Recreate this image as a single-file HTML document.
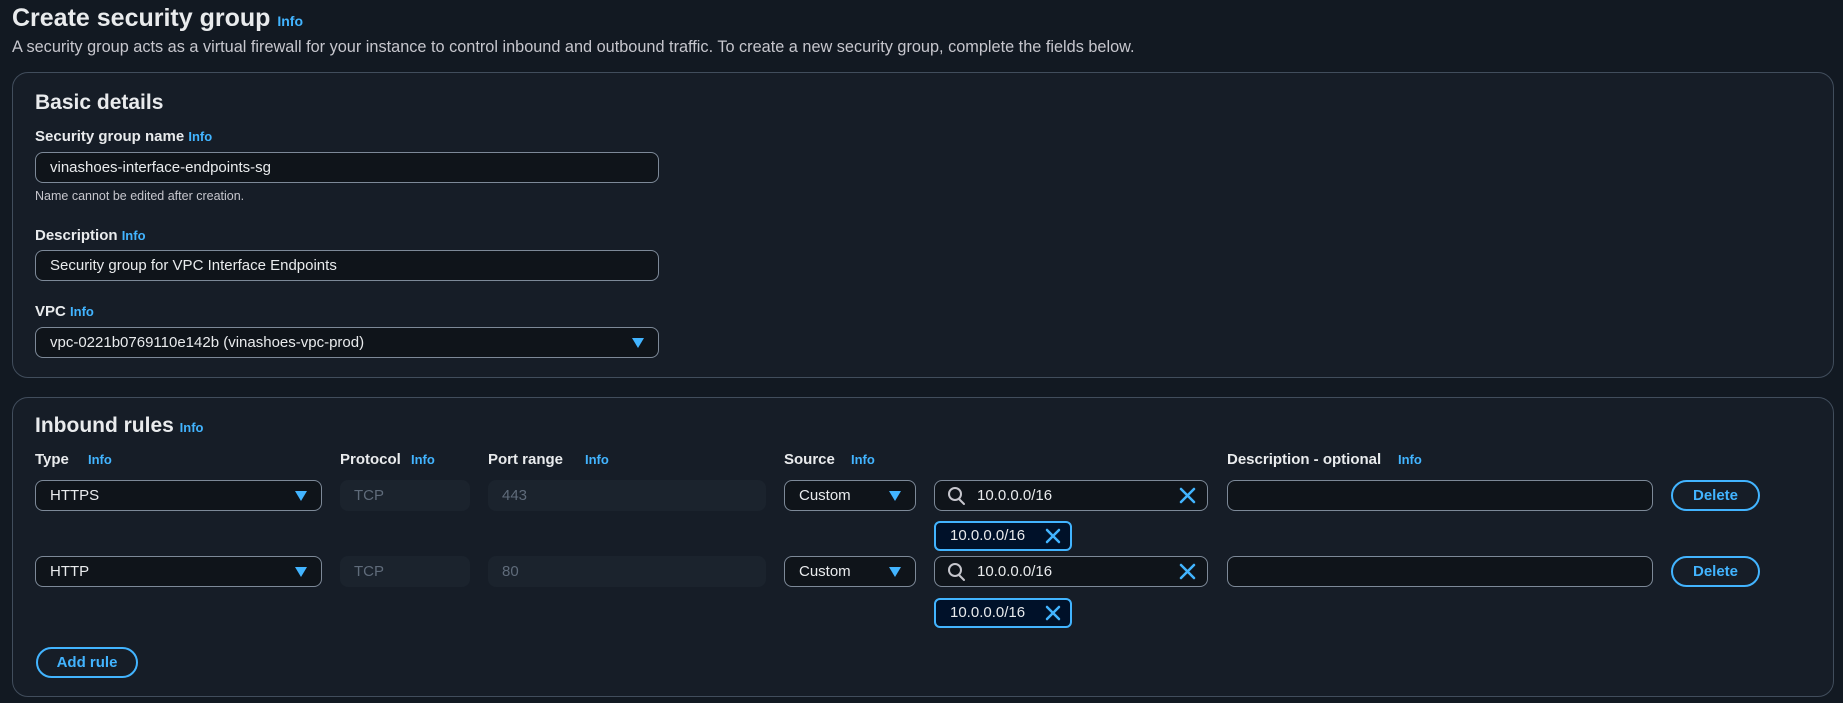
<!DOCTYPE html>
<html><head><meta charset="utf-8"><style>
*{box-sizing:border-box;margin:0;padding:0}
body{width:1843px;height:703px;background:#121922;font-family:"Liberation Sans",Arial,sans-serif;color:#e9ebed;position:relative;overflow:hidden}
.a{position:absolute;white-space:nowrap}
.info{color:#42b4ff;font-weight:bold;font-size:13px}
.panel{position:absolute;left:12px;width:1822px;background:#161d27;border:1px solid #414d5c;border-radius:16px}
.lbl{font-weight:bold;font-size:15px}
.inp{position:absolute;height:31px;border:1px solid #7d8998;border-radius:8px;background:#0f141a;font-size:15px;line-height:29px;padding-left:14px;color:#e9ebed}
.dis{position:absolute;height:31px;border-radius:8px;background:#1b232d;font-size:15px;line-height:31px;padding-left:14px;color:#5f6b7a}
.arr{position:absolute;right:14px;top:10px;width:0;height:0;border-left:6px solid transparent;border-right:6px solid transparent;border-top:10px solid #42b4ff}
.btn{position:absolute;height:31px;border:2px solid #42b4ff;border-radius:16px;color:#42b4ff;font-weight:bold;font-size:15px;line-height:27px;text-align:center}
.tok{position:absolute;height:30px;border:2px solid #42b4ff;border-radius:6px;background:#001129;font-size:15px;line-height:26px;padding-left:14px}
</style></head><body>
<div class="a" style="left:12px;top:4px;font-size:25px;font-weight:bold">Create security group <span class="info" style="font-size:14px">Info</span></div>
<div class="a" style="left:12px;top:38px;font-size:16.3px;color:#c6c6cd">A security group acts as a virtual firewall for your instance to control inbound and outbound traffic. To create a new security group, complete the fields below.</div>

<div class="panel" style="top:72px;height:306px"></div>
<div class="a" style="left:35px;top:91px;font-size:21px;font-weight:bold">Basic details</div>
<div class="a lbl" style="left:35px;top:128px">Security group name <span class="info">Info</span></div>
<div class="inp" style="left:35px;top:152px;width:624px">vinashoes-interface-endpoints-sg</div>
<div class="a" style="left:35px;top:189px;font-size:12.5px;color:#c6c6cd">Name cannot be edited after creation.</div>
<div class="a lbl" style="left:35px;top:227px">Description <span class="info">Info</span></div>
<div class="inp" style="left:35px;top:250px;width:624px">Security group for VPC Interface Endpoints</div>
<div class="a lbl" style="left:35px;top:303px">VPC <span class="info">Info</span></div>
<div class="inp" style="left:35px;top:327px;width:624px">vpc-0221b0769110e142b (vinashoes-vpc-prod)<div class="arr"></div></div>

<div class="panel" style="top:397px;height:300px"></div>
<div class="a" style="left:35px;top:414px;font-size:21px;font-weight:bold">Inbound rules <span class="info">Info</span></div>
<div class="a lbl" style="left:35px;top:451px">Type</div><div class="a info" style="left:88px;top:452px">Info</div>
<div class="a lbl" style="left:340px;top:451px">Protocol</div><div class="a info" style="left:411px;top:452px">Info</div>
<div class="a lbl" style="left:488px;top:451px">Port range</div><div class="a info" style="left:585px;top:452px">Info</div>
<div class="a lbl" style="left:784px;top:451px">Source</div><div class="a info" style="left:851px;top:452px">Info</div>
<div class="a lbl" style="left:1227px;top:451px">Description - optional</div><div class="a info" style="left:1398px;top:452px">Info</div>

<div class="inp" style="left:35px;top:480px;width:287px">HTTPS<div class="arr"></div></div>
<div class="dis" style="left:340px;top:480px;width:130px">TCP</div>
<div class="dis" style="left:488px;top:480px;width:278px">443</div>
<div class="inp" style="left:784px;top:480px;width:132px">Custom<div class="arr"></div></div>
<div class="inp" style="left:934px;top:480px;width:274px;padding-left:42px">10.0.0.0/16</div>
<div class="inp" style="left:1227px;top:480px;width:426px"></div>
<div class="btn" style="left:1671px;top:480px;width:89px">Delete</div>
<div class="tok" style="left:934px;top:521px;width:138px">10.0.0.0/16</div>

<div class="inp" style="left:35px;top:556px;width:287px">HTTP<div class="arr"></div></div>
<div class="dis" style="left:340px;top:556px;width:130px">TCP</div>
<div class="dis" style="left:488px;top:556px;width:278px">80</div>
<div class="inp" style="left:784px;top:556px;width:132px">Custom<div class="arr"></div></div>
<div class="inp" style="left:934px;top:556px;width:274px;padding-left:42px">10.0.0.0/16</div>
<div class="inp" style="left:1227px;top:556px;width:426px"></div>
<div class="btn" style="left:1671px;top:556px;width:89px">Delete</div>
<div class="tok" style="left:934px;top:598px;width:138px">10.0.0.0/16</div>

<div class="btn" style="left:36px;top:647px;width:102px">Add rule</div>

<svg class="a" style="left:0;top:0" width="1843" height="703" fill="none" stroke-linecap="round">
<g stroke="#c6c6cd" stroke-width="2"><circle cx="955" cy="494" r="6"/><path d="M959 499l5 5"/><circle cx="955" cy="570" r="6"/><path d="M959 575l5 5"/></g>
<g stroke="#42b4ff" stroke-width="2.5"><path d="M1181 489l13 13M1194 489l-13 13M1181 565l13 13M1194 565l-13 13"/><path d="M1047 530l12 12M1059 530l-12 12M1047 607l12 12M1059 607l-12 12"/></g>
</svg>
</body></html>
